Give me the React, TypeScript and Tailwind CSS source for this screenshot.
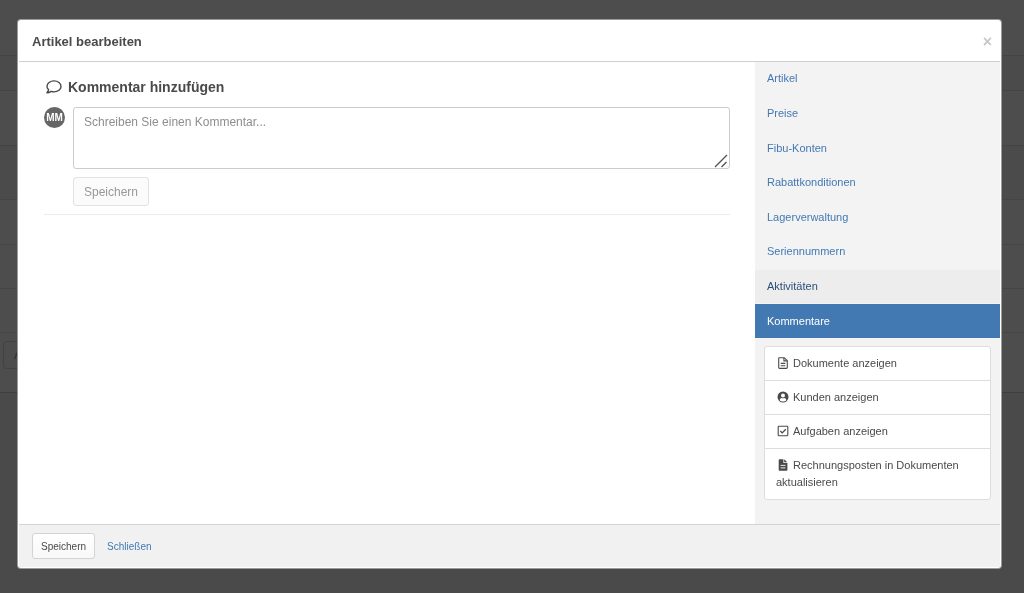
import React, { useState } from 'react';

type IconProps = { className?: string };

function CommentIcon({ className }: IconProps) {
  return (
    <svg viewBox="0 0 16 16" className={className} fill="none" stroke="currentColor" strokeWidth="1.4" strokeLinejoin="round">
      <path d="M8 1.900c3.900 0 7 2.400 7 5.500s-3.100 5.500-7 5.500c-1 0-2-.2-2.900-.5-1.200.9-2.600 1.400-4.200 1.400.9-.9 1.500-2 1.700-3.200C1.600 9.700 1 8.600 1 7.400c0-3.100 3.100-5.500 7-5.500z" />
    </svg>
  );
}

function FileIcon({ className }: IconProps) {
  return (
    <svg viewBox="0 0 12 12" className={className} fill="none" stroke="currentColor" strokeLinejoin="round">
      <path d="M1.700 1.600c0-.6.3-.9.9-.9h4.500l3.200 3v6.800c0 .6-.3.900-.9.900H2.600c-.6 0-.9-.3-.9-.9z" strokeWidth="1.100" />
      <path d="M6.900.9v3h3.200M3.700 6.400h4.600M3.700 8.700h4.600" strokeWidth="1.100" />
    </svg>
  );
}

function UserCircleIcon({ className }: IconProps) {
  return (
    <svg viewBox="0 0 12 12" className={className}>
      <circle cx="6" cy="6" r="5.500" fill="currentColor" />
      <circle cx="6" cy="4.600" r="2" fill="white" />
      <path d="M2.600 9.200c.3-1.400 1.200-2.100 2.200-2.100.8.3 1.600.3 2.400 0 1 0 1.900.7 2.200 2.100C8.500 10.100 7.300 10.600 6 10.600s-2.500-.5-3.400-1.400z" fill="white" />
    </svg>
  );
}

function CheckSquareIcon({ className }: IconProps) {
  return (
    <svg viewBox="0 0 12 12" className={className} fill="none" stroke="currentColor">
      <rect x="1.200" y="1.200" width="9.600" height="9.600" rx="0.800" strokeWidth="1.100" />
      <path d="m3.300 6 1.900 1.900 3.600-3.700" strokeWidth="1.300" />
    </svg>
  );
}

function FileSolidIcon({ className }: IconProps) {
  return (
    <svg viewBox="0 0 12 12" className={className}>
      <path d="M1.700 1c0-.5.3-.8.800-.8h3.900v3.300c0 .4.2.6.6.6h3.400V11c0 .5-.3.800-.8.800H2.500c-.5 0-.8-.3-.8-.8z" fill="currentColor" />
      <path d="M7.200.3 10.300 3.300H7.200z" fill="currentColor" />
      <path d="M3.600 6.400h4.900M3.600 8.900h4.900" stroke="white" strokeWidth="0.900" />
    </svg>
  );
}

const tabs = [
  'Artikel',
  'Preise',
  'Fibu-Konten',
  'Rabattkonditionen',
  'Lagerverwaltung',
  'Seriennummern',
  'Aktivitäten',
  'Kommentare',
];

const actions = [
  { label: 'Dokumente anzeigen', icon: FileIcon },
  { label: 'Kunden anzeigen', icon: UserCircleIcon },
  { label: 'Aufgaben anzeigen', icon: CheckSquareIcon },
  { label: 'Rechnungsposten in Dokumenten aktualisieren', icon: FileSolidIcon },
];

function tabClass(tab: string, active: string) {
  if (tab === active) return 'bg-[#4379b3] text-white';
  if (tab === 'Aktivitäten') return 'bg-[#ededed] text-[#2c4f77]';
  return 'text-[#4379b3] hover:bg-[#ededed]';
}

// Dimmed list page behind the dialog
function PageBehind() {
  return (
    <div aria-hidden="true" className="min-h-screen bg-[#4a4a4a] text-xs text-[#2c2c2c]">
      <div className="h-14 border-b border-[#444444] bg-[#4d4d4d]"></div>
      <div className="h-[35px] border-b border-[#434343] bg-[#4b4b4b]"></div>
      <div className="h-[55px] border-b border-[#434343] bg-[#4d4d4d]"></div>
      <div className="h-[54px] border-b border-[#454545] bg-[#4b4b4b]"></div>
      <div className="h-[45px] border-b border-[#454545] bg-[#4d4d4d]"></div>
      <div className="h-11 border-b border-[#454545] bg-[#4d4d4d]"></div>
      <div className="h-11 border-b border-[#454545] bg-[#4d4d4d]"></div>
      <div className="h-15 border-b border-[#3e3e3e] bg-[#4d4d4d] px-[3px] py-2">
        <div className="flex h-7 w-10 items-center rounded border border-[#424242] px-2.5">A</div>
      </div>
    </div>
  );
}

export default function App() {
  const [active, setActive] = useState('Kommentare');
  const [comment, setComment] = useState('');

  return (
    <div className="font-['Liberation_Sans',Arial,sans-serif] text-[11px] leading-[17px] text-[#4a4a4a]">
      <PageBehind />

      <div className="fixed inset-0 flex flex-col pt-5 pr-[23px] pb-[25px] pl-[18px]">
        <div
          role="dialog"
          aria-labelledby="dialog-title"
          className="flex min-h-0 flex-1 flex-col rounded-[3px] bg-white px-px pb-px ring-1 ring-[#9b9b9b]"
        >
          <header className="flex h-[42px] shrink-0 items-center justify-between border-b border-[#cfcfcf] pt-0.5 pr-2 pl-[13px]">
            <h1 id="dialog-title" className="text-[13px] font-bold">
              Artikel bearbeiten
            </h1>
            <button type="button" aria-label="Dialog schließen" className="text-base font-bold text-[#c8c8c8]">
              ×
            </button>
          </header>

          <div className="flex min-h-0 flex-1">
            <main className="min-w-0 flex-1 px-[25px] pt-4">
              <h2 className="flex items-center gap-1.5 pl-0.5 text-sm leading-[18px] font-bold">
                <CommentIcon className="size-4" />
                Kommentar hinzufügen
              </h2>

              <form
                className="mt-[11px] flex gap-2 border-b border-[#ececec] pb-2"
                onSubmit={(e) => e.preventDefault()}
              >
                <div className="flex size-[21px] shrink-0 items-center justify-center rounded-full bg-[#666666] text-[10px] font-bold text-white">
                  MM
                </div>
                <div className="min-w-0 flex-1">
                  <div className="relative">
                    <textarea
                      aria-label="Kommentar"
                      value={comment}
                      onChange={(e) => setComment(e.target.value)}
                      placeholder="Schreiben Sie einen Kommentar..."
                      className="block h-[62px] w-full resize-none rounded-[3px] border border-[#cccccc] bg-white px-2.5 py-1.5 text-xs outline-none placeholder:text-[#8e8e8e]"
                    />
                    <svg
                      viewBox="0 0 14 14"
                      className="pointer-events-none absolute right-0.5 bottom-px size-3.5 stroke-[#555555]"
                      strokeWidth="1.4"
                      fill="none"
                    >
                      <path d="M1 13 13 1M7.500 13l5-5" />
                    </svg>
                  </div>
                  <button
                    type="submit"
                    disabled={!comment}
                    className="mt-2 h-[29px] rounded-[3px] border border-[#e2e2e2] bg-[#fbfbfb] px-2.5 text-xs text-[#96999c]"
                  >
                    Speichern
                  </button>
                </div>
              </form>
            </main>

            <aside className="w-[245px] shrink-0 bg-[#f3f3f3]">
              <nav className="grid h-69 auto-rows-fr gap-px">
                {tabs.map((tab) => (
                  <a
                    key={tab}
                    href="#"
                    onClick={() => setActive(tab)}
                    className={`flex items-center px-3 ${tabClass(tab, active)}`}
                  >
                    {tab}
                  </a>
                ))}
              </nav>

              <ul className="mx-[9px] mt-2 divide-y divide-[#dddddd] rounded-[3px] border border-[#dddddd] bg-white">
                {actions.map(({ label, icon: Icon }) => (
                  <li key={label}>
                    <a href="#" className="block px-[11px] py-2">
                      <Icon className="mr-1 ml-px inline size-3 align-[-2px]" />
                      {label}
                    </a>
                  </li>
                ))}
              </ul>
            </aside>
          </div>

          <footer className="flex h-[43px] shrink-0 items-center gap-3 border-t border-[#d4d4d4] bg-[#f1f1f1] px-[13px] text-[10px]">
            <button
              type="button"
              className="h-[26px] rounded-[3px] border border-[#d4d4d4] bg-linear-to-b from-white to-[#f8f8f8] px-2"
            >
              Speichern
            </button>
            <a href="#" className="text-[#4379b3]">
              Schließen
            </a>
          </footer>
        </div>
      </div>
    </div>
  );
}
